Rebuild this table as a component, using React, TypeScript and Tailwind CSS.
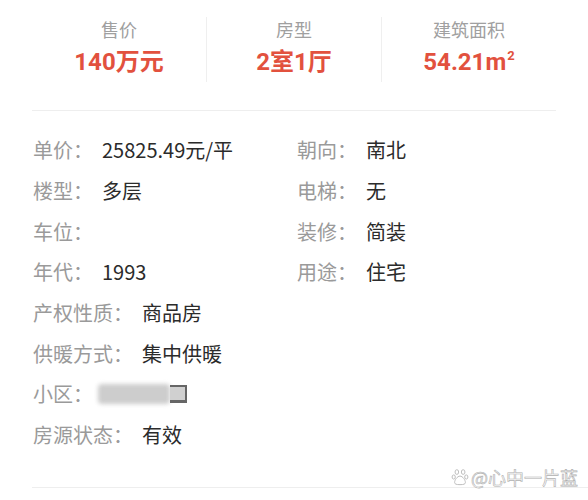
import React from "react";

const stats = [
  { label: "售价", value: "140万元" },
  { label: "房型", value: "2室1厅" },
  { label: "建筑面积", value: "54.21m", sup: "2" },
];

const pairRows = [
  ["单价", "25825.49元/平", "朝向", "南北"],
  ["楼型", "多层", "电梯", "无"],
  ["车位", "", "装修", "简装"],
  ["年代", "1993", "用途", "住宅"],
];

const singleRows = [
  ["产权性质", "商品房"],
  ["供暖方式", "集中供暖"],
  ["小区", "blur"],
  ["房源状态", "有效"],
];

const Field = ({ label, value }: { label: string; value: string }) => (
  <div className="flex items-center">
    <span className="text-[#9a9a9a]">{label}：</span>
    {value === "blur" ? (
      <span className="ml-[5px] flex items-center h-[22px]">
        <span className="w-[72px] h-[20px] bg-[#cdcdcd] blur-[2px] rounded-sm" />
        <span className="w-[17px] h-[18px] border-t-[2px] border-b-[3px] border-r-[2px] border-[#666] blur-[0.6px] bg-[#d0d0d0]" />
      </span>
    ) : (
      <span className="ml-[9px] text-[#2b2b2b]">{value}</span>
    )}
  </div>
);

const Paw = () => (
  <svg width="18" height="18" viewBox="0 0 20 20" fill="none" stroke="#bdbdbd" strokeWidth="1.1">
    <ellipse cx="6.5" cy="4.5" rx="2" ry="2.6" />
    <ellipse cx="13.5" cy="4.5" rx="2" ry="2.6" />
    <ellipse cx="3" cy="10" rx="1.8" ry="2.3" />
    <ellipse cx="17" cy="10" rx="1.8" ry="2.3" />
    <path d="M10 9c-3 0-6 4.5-6 7 0 2 2 2.5 6 2.5s6-.5 6-2.5c0-2.5-3-7-6-7z" />
  </svg>
);

export default function App() {
  return (
    <div
      className="relative w-[588px] h-[500px] bg-white overflow-hidden"
      style={{ fontFamily: '"Noto Sans CJK SC", "Noto Sans", sans-serif' }}
    >
      <div className="flex mx-[32px] pt-[17px]">
        {stats.map((s, i) => (
          <div
            key={s.label}
            className={`flex-1 h-[65px] flex flex-col items-center ${i > 0 ? "border-l border-[#efefef]" : ""}`}
          >
            <div className="text-[18px] leading-[24px] text-[#a0a0a0]">{s.label}</div>
            <div
              className="mt-[6px] text-[24px] leading-[30px] font-bold text-[#e2513e]"
              style={{ fontFamily: 'Roboto, "Noto Sans CJK SC", sans-serif' }}
            >
              {s.value}
              {s.sup && <sup className="text-[13px] relative -top-[10px] ml-[1px]">{s.sup}</sup>}
            </div>
          </div>
        ))}
      </div>

      <div className="mx-[32px] mt-[28px] h-px bg-[#eeeeee]" />

      <div className="mt-[19px] pl-[33px] text-[20px]">
        {pairRows.map((r) => (
          <div key={r[0]} className="h-[40.7px] flex items-center">
            <div className="w-[264px]">
              <Field label={r[0]} value={r[1]} />
            </div>
            <Field label={r[2]} value={r[3]} />
          </div>
        ))}
        {singleRows.map((r) => (
          <div key={r[0]} className="h-[40.7px] flex items-center">
            <Field label={r[0]} value={r[1]} />
          </div>
        ))}
      </div>

      <div className="ml-[32px] mt-[31px] h-px bg-[#eeeeee]" />

      <div className="absolute right-[10px] bottom-[12px] flex items-center gap-[2px]">
        <Paw />
        <span className="text-[18px] leading-[22px] text-[#fafafa] [-webkit-text-stroke:0.6px_#b0b0b0]">
          @心中一片蓝
        </span>
      </div>
    </div>
  );
}
